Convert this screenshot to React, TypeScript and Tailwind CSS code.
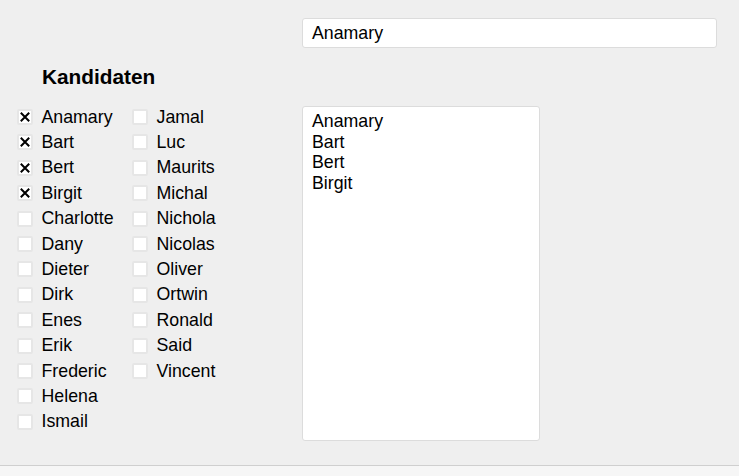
import React from 'react';

const left = ['Anamary', 'Bart', 'Bert', 'Birgit', 'Charlotte', 'Dany', 'Dieter', 'Dirk', 'Enes', 'Erik', 'Frederic', 'Helena', 'Ismail'];
const right = ['Jamal', 'Luc', 'Maurits', 'Michal', 'Nichola', 'Nicolas', 'Oliver', 'Ortwin', 'Ronald', 'Said', 'Vincent'];
const checked = ['Anamary', 'Bart', 'Bert', 'Birgit'];

function Check({ name }: { name: string }) {
  const on = checked.includes(name);
  return (
    <div className="flex items-center gap-[8.5px] h-[25.4px]">
      <div className="w-4 h-4 bg-white border-2 border-[#e6e6e6] rounded-[2px] flex items-center justify-center flex-shrink-0">
        {on && (
          <svg width="10" height="10" viewBox="0 0 10 10">
            <path d="M0.8 0.8 L9.2 9.2 M9.2 0.8 L0.8 9.2" stroke="#000" strokeWidth="2" fill="none" />
          </svg>
        )}
      </div>
      <span>{name}</span>
    </div>
  );
}

export default function App() {
  return (
    <div className="w-[739px] h-[476px] bg-[#efefef] flex flex-col text-black text-[17.75px] font-['Liberation_Sans',Arial,sans-serif]">
      <div className="h-[465px] flex flex-col">
        <div className="pt-[18px] pl-[302px]">
          <div className="w-[415px] h-[30px] bg-white border border-[#dcdcdc] rounded-[3px] flex items-center pl-[9px]">
            Anamary
          </div>
        </div>
        <div className="flex mt-[17px]">
          <div className="w-[302px] flex flex-col">
            <h3 className="pl-[42px] text-[20.8px] font-bold h-[24px] leading-[24px]">Kandidaten</h3>
            <div className="mt-[15.3px] pl-[17px] grid grid-flow-col grid-rows-[repeat(13,25.4px)] grid-cols-[115px_auto]">
              {left.map(n => <Check key={n} name={n} />)}
              {right.map(n => <Check key={n} name={n} />)}
            </div>
          </div>
          <div className="mt-[41px] w-[238px] h-[335px] bg-white border border-[#dcdcdc] rounded-[3px] pl-[9px] pt-[4px] leading-[20.5px]">
            {checked.map(n => <div key={n}>{n}</div>)}
          </div>
        </div>
      </div>
      <div className="h-px bg-[#cfcfcf]" />
      <div className="flex-1 bg-[#f6f6f6]" />
    </div>
  );
}
